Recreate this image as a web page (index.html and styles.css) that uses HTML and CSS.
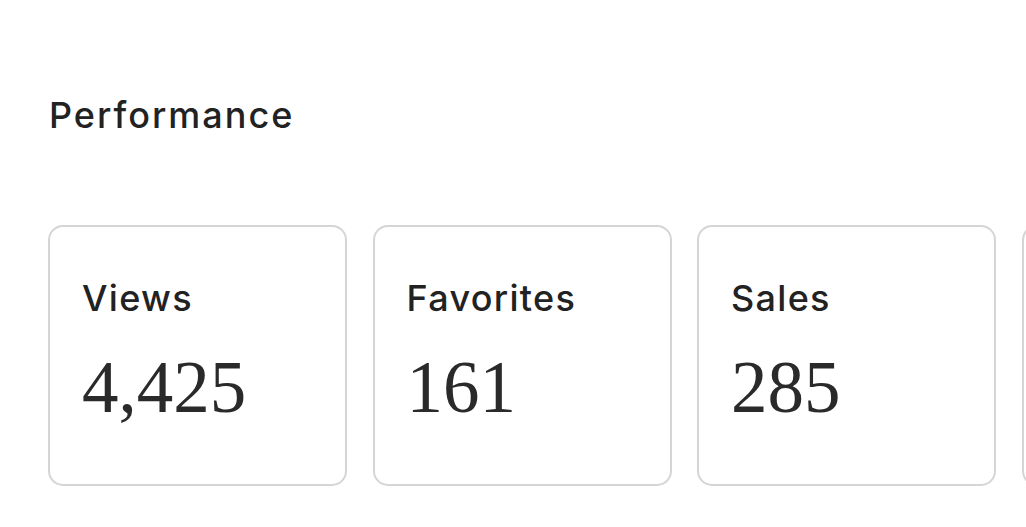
FILE: index.html
```html
<!DOCTYPE html>
<html lang="en">
<head>
<meta charset="utf-8">
<title>Performance</title>
<link rel="stylesheet" href="styles.css">
</head>
<body>
  <main class="page">
    <h1 class="title">Performance</h1>
    <div class="cards">
      <section class="card">
        <h2 class="card-label">Views</h2>
        <p class="card-value">4,425</p>
      </section>
      <section class="card">
        <h2 class="card-label">Favorites</h2>
        <p class="card-value">161</p>
      </section>
      <section class="card">
        <h2 class="card-label">Sales</h2>
        <p class="card-value">285</p>
      </section>
      <section class="card" aria-hidden="true">
        <h2 class="card-label">&nbsp;</h2>
        <p class="card-value">&nbsp;</p>
      </section>
    </div>
  </main>
</body>
</html>
```

FILE: styles.css
```css
html, body {
  margin: 0;
  padding: 0;
  background: #ffffff;
}

body {
  font-family: Inter, "Liberation Sans", Arial, sans-serif;
  color: #222222;
  overflow: hidden;
}

.page {
  padding: 93px 0 0 48px;
}

.title {
  margin: 0 0 88px 1px;
  font-size: 36px;
  line-height: 44px;
  font-weight: 500;
  letter-spacing: 2px;
}

.cards {
  display: flex;
  gap: 25.5px;
}

.card {
  flex: 0 0 auto;
  box-sizing: border-box;
  width: 299px;
  height: 261px;
  border: 2px solid #d5d5d5;
  border-radius: 15px;
  padding: 49px 31px 0 32px;
}

.card-label {
  margin: 0;
  font-size: 36px;
  line-height: 44px;
  font-weight: 550;
  letter-spacing: 1.3px;
}

.card-value {
  margin: 28px 0 0;
  font-family: "Liberation Serif", "Times New Roman", serif;
  font-size: 73px;
  line-height: 80px;
  font-weight: 400;
  color: #2a2a2a;
}
```
